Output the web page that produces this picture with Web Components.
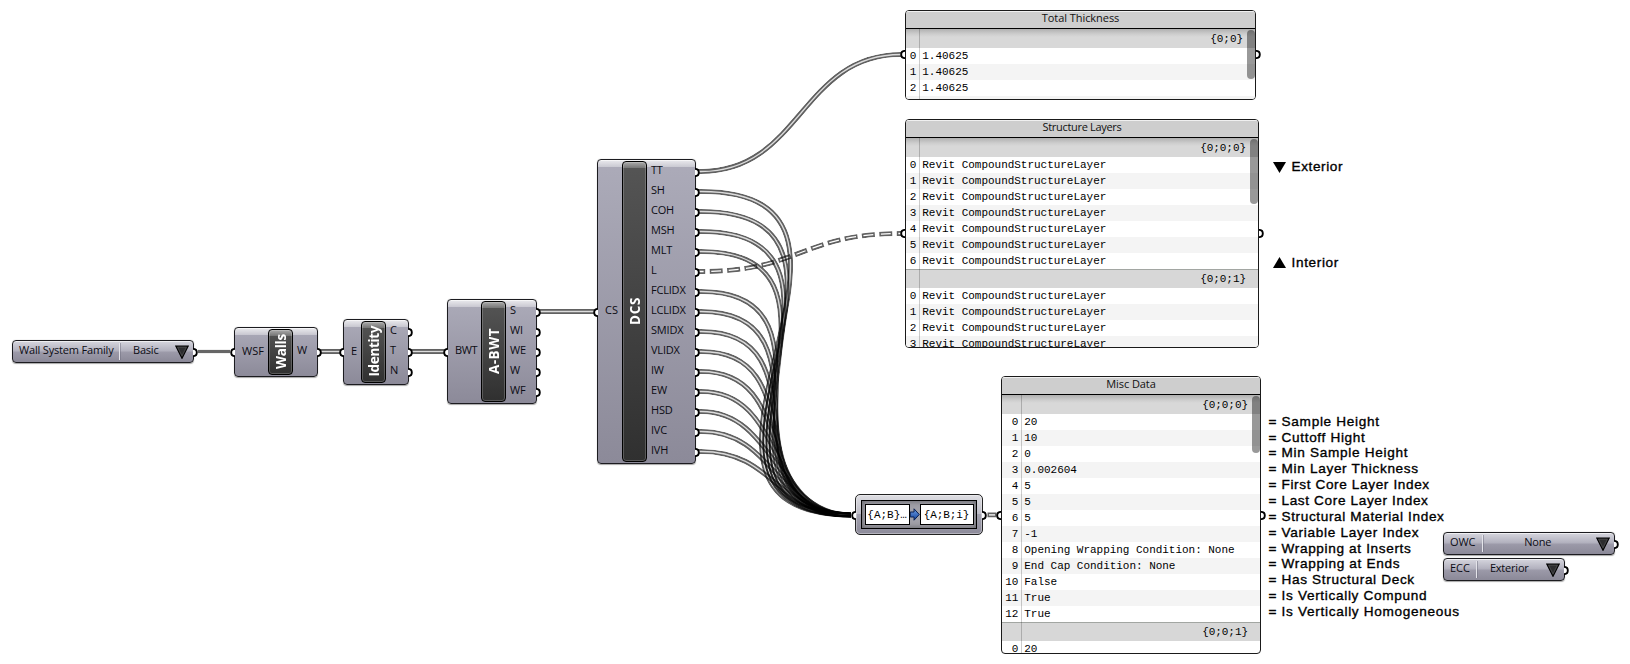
<!DOCTYPE html>
<html lang="en">
<head>
<meta charset="utf-8">
<title>Wall structure definition</title>
<style>
html,body{margin:0;padding:0;background:#fff}
body{width:1630px;height:664px;overflow:hidden;font-family:"Open Sans","Noto Sans",sans-serif}
</style>
</head>
<body>
<gh-canvas></gh-canvas>
<script>
const esc = s => String(s).replace(/&/g,'&amp;').replace(/</g,'&lt;');
class Base extends HTMLElement {
  connectedCallback() {
    if (!this.shadowRoot) this.attachShadow({mode:'open'});
    this.shadowRoot.innerHTML = this.view();
    if (this.after) this.after();
  }
}

/* text run spaced out to a given advance width */
class GhText extends Base {
  view() { return `<style>:host{display:inline-block;white-space:pre}span{display:inline-block}</style><span><slot></slot></span>`; }
  after() {
    const w = +this.getAttribute('w'), n = this.textContent.length;
    if (!w || n < 2) return;
    const span = this.shadowRoot.querySelector('span');
    const dir = this.hasAttribute('vertical') ? 'height' : 'width';
    const cur = span.getBoundingClientRect()[dir];
    if (cur) span.style.letterSpacing = ((w - cur) / n).toFixed(3) + 'px';
  }
}
customElements.define('gh-text', GhText);

/* half-round connection grip that sits on a node's edge */
class GhGrip extends Base {
  view() {
    return `<style>
:host{position:absolute;width:5px;height:9px;top:calc(50% - 4px);right:-5px}
:host([side=in]){right:auto;left:-5px}
svg{display:block}
:host([side=in]) svg{transform:scaleX(-1)}
</style><svg width="5" height="9" viewBox="0 0 5 9"><path d="M0 .9C2.2.9 3.8 2.4 3.8 4.5S2.2 8.1 0 8.1" fill="#fff" stroke="#000" stroke-width="1.9"/></svg>`;
  }
}
customElements.define('gh-grip', GhGrip);

class GhComponent extends Base {
  view() {
    const a = n => this.getAttribute(n);
    const outs = a('outs').split(',');
    return `<style>
:host{display:block}
.body{position:relative;box-sizing:border-box;width:100%;height:100%;display:flex;align-items:stretch;border:1px solid #1c1c20;border-radius:4px;
 background:linear-gradient(rgba(255,255,255,.75),rgba(255,255,255,.36) 7px,transparent 7.5px),linear-gradient(#acabb9,#8c8a99);
 box-shadow:inset 0 1px 0 rgba(255,255,255,.6),0 .5px 1px rgba(0,0,0,.35);font-size:11px;color:#0c0c14}
.in{position:relative;flex:none;width:${+a('tx')-1}px;display:flex;align-items:center}
.in gh-text{margin-left:7px;margin-top:-4px}
.title{flex:none;box-sizing:border-box;width:25px;margin:1px 0;border:1.5px solid #000;border-radius:4px;display:flex;align-items:center;justify-content:center;
 background:linear-gradient(rgba(255,255,255,.5),rgba(255,255,255,.2) 6px,transparent 6.5px),linear-gradient(#555,#303030);
 box-shadow:inset 0 0 0 1px rgba(255,255,255,.2);color:#fff;font-weight:700;font-size:13.5px}
.title gh-text{writing-mode:vertical-rl;transform:rotate(180deg);line-height:20px;margin-top:-1px}
.outs{flex:1;display:flex;flex-direction:column;justify-content:center}
.o{position:relative;height:20px;line-height:15px;padding-left:4px;letter-spacing:-.2px}
</style><div class="body">
<div class="in"><gh-grip side="in"></gh-grip><gh-text w="${a('iw')}">${a('in')}</gh-text></div>
<div class="title"><gh-text vertical w="${a('tw')}">${a('title')}</gh-text></div>
<div class="outs">${outs.map(o=>`<div class="o">${o}<gh-grip></gh-grip></div>`).join('')}</div>
</div>`;
  }
}
customElements.define('gh-component', GhComponent);

class GhValueList extends Base {
  view() {
    const a = n => this.getAttribute(n);
    return `<style>
:host{display:block}
.body{position:relative;box-sizing:border-box;width:100%;height:100%;display:flex;align-items:center;border:1.3px solid #1c1c20;border-radius:4px;
 background:linear-gradient(#d6d6de,#b3b2bf 45%,#9b99a8 55%,#8b8998);box-shadow:inset 0 1px 0 rgba(255,255,255,.6),0 .5px 1px rgba(0,0,0,.35);font-size:11px;color:#0c0c14}
.l{flex:none;width:${+a('dx')-1}px;height:17px;line-height:14px;box-sizing:border-box;padding-left:6px;border-right:1px solid #e4e4ea;box-shadow:1px 0 0 rgba(110,110,125,.5)}
.v{flex:1;text-align:center;line-height:14px;height:17px;padding-right:${a('pr')||0}px}
svg{flex:none;margin-right:4px}
</style><div class="body"><div class="l"><gh-text w="${a('lw')}">${a('label')}</gh-text></div><div class="v"><gh-text w="${a('vw')}">${a('value')}</gh-text></div>
<svg width="14" height="14" viewBox="0 0 14 14"><path d="M.7 1H13.3L7 13.4Z" fill="#222" stroke="#000" stroke-width="1.1"/><path d="M2.6 2.2H11.4L7 10.9Z" fill="#2c2c2e" stroke="#66666b" stroke-width=".5"/></svg>
<gh-grip></gh-grip></div>`;
  }
}
customElements.define('gh-value-list', GhValueList);

class GhPanel extends Base {
  view() {
    const a = n => this.getAttribute(n);
    const groups = JSON.parse(a('groups'));
    return `<style>
:host{display:block}
.wrap{position:relative;width:100%;height:100%}
.body{position:relative;box-sizing:border-box;width:100%;height:100%;display:flex;flex-direction:column;border:1.4px solid #1a1a1a;border-radius:4px;overflow:hidden;background:#fff}
.head{flex:none;box-sizing:border-box;height:18px;border-bottom:1.5px solid #000;background:#cecece;box-shadow:inset 0 1px 0 #f0f0f0;text-align:center;font-size:11px;line-height:14px;color:#111}
.list{position:relative;flex:1;overflow:hidden;font:11px/16px "Liberation Mono",monospace;color:#000}
.path{box-sizing:border-box;height:19px;line-height:20px;background:#d7d7d7;text-align:right;padding-right:${a('pr')}px;letter-spacing:-.05px}
.path.first{background:linear-gradient(#b0b0b0,#cdcdcd 5px,#d8d8d8 8px)}
.path:not(.first){border-top:1px solid #a2a6a2;line-height:18px}
.row{display:flex;height:16px;white-space:pre;letter-spacing:-.03px}
.row.alt{background:#f4f4f4}
.i{flex:none;width:${+a('gx')-4.2}px;text-align:right}
.val{margin-left:6px}
.gut{position:absolute;left:${+a('gx')-2}px;top:0;bottom:0;width:1px;background:rgba(0,0,0,.2)}
.bar{position:absolute;right:.5px;top:1px;width:7.6px;height:${a('bar')}px;border-radius:4px;background:rgba(0,0,0,.4)}
.port{position:absolute;left:0;right:0;top:${+a('py')-4.5}px;height:9px}
</style><div class="wrap"><div class="body"><div class="head"><gh-text w="${a('tw')}">${a('title')}</gh-text></div>
<div class="list">${groups.map((g,k)=>`<div class="path${k?'':' first'}">${g.p}</div>`+g.r.map((v,i)=>`<div class="row${i%2?' alt':''}">${v===''?'':`<span class="i">${i}</span><span class="val">${esc(v)}</span>`}</div>`).join('')).join('')}
<div class="gut"></div><div class="bar"></div></div></div>
<div class="port"><gh-grip side="in"></gh-grip><gh-grip></gh-grip></div></div>`;
  }
}
customElements.define('gh-panel', GhPanel);

class GhPathMapper extends Base {
  view() {
    return `<style>
:host{display:block}
.body{position:relative;box-sizing:border-box;width:100%;height:100%;padding:5px;border:1.4px solid #222;border-radius:5px;
 background:linear-gradient(#dedee3,#bdbcc6 49%,#a3a2af 50%,#8d8b9a);box-shadow:inset 0 0 0 1px rgba(255,255,255,.35)}
.frame{box-sizing:border-box;width:100%;height:100%;border:1.2px solid #000;display:flex;align-items:center;padding:0 2.6px;
 background:#a2a1a9;box-shadow:inset 0 0 5px 1px #6a6a70}
.c{flex:none;box-sizing:border-box;height:21px;border:1.2px solid #000;background:#fff;font:11px/21px "Liberation Mono",monospace;white-space:nowrap;text-align:center}
svg{flex:none;display:block}
</style><div class="body"><gh-grip side="in"></gh-grip><div class="frame">
<div class="c" style="width:45px"><gh-text w="39.5">{A;B}…</gh-text></div>
<svg width="10" height="13" viewBox="0 0 9.5 13"><defs><linearGradient id="b" x1="0" y1="0" x2="0" y2="1"><stop offset="0" stop-color="#6f9fe6"/><stop offset="1" stop-color="#12429c"/></linearGradient></defs><path d="M0 4H3.8V.8L9 6.5L3.8 12.2V9H0Z" fill="url(#b)" stroke="#0a1f50" stroke-width="1"/></svg>
<div class="c" style="width:54px"><gh-text w="45.5">{A;B;i}</gh-text></div>
</div><gh-grip></gh-grip></div>`;
  }
}
customElements.define('gh-path-mapper', GhPathMapper);

class GhWires extends Base {
  view() {
    const W = [];
    const curve = (x1,y1,x2,y2) => {
      const k = Math.max((x2-x1)*.5, Math.abs(y2-y1)*.7);
      return `M${x1-3} ${y1}H${x1}C${x1+k} ${y1} ${x2-k} ${y2} ${x2} ${y2}`;
    };
    W.push({d:curve(701,171.5,901,54.5)});
    for (let i=1;i<15;i++) if (i!==5) W.push({d:curve(701,171.5+20*i,851,515)});
    W.push({d:curve(701,271.5,901,233.5),dash:'13 4.5',off:6,inner:'10 7.5',ioff:4.5});
    W.push({d:'M321 351.5H340'},{d:'M412 351.5H444'},{d:'M540 311.5H594'});
    W.push({d:'M986 514.9H997',dash:'9 20',off:-1.5,inner:'6 20',ioff:-3});
    const dash = (v,o) => v ? `stroke-dasharray="${v}" stroke-dashoffset="${o}"` : '';
    return `<style>:host{display:block}svg{display:block}</style>
<svg width="1630" height="664" fill="none"><defs>${W.map((w,i)=>`<mask id="m${i}" maskUnits="userSpaceOnUse" x="0" y="0" width="1630" height="664"><path d="${w.d}" stroke="#fff" stroke-width="5.2" ${dash(w.dash,w.off)}/><path d="${w.d}" stroke="${w.dash?'#000':'#383838'}" stroke-width="1.3" ${dash(w.inner,w.ioff)}/></mask>`).join('')}</defs>
<path d="M198 351.5H230" stroke="#000" stroke-opacity=".6" stroke-width="3.2"/>
${W.map((w,i)=>`<g mask="url(#m${i})"><path d="${w.d}" stroke="#000" stroke-opacity=".62" stroke-width="5.2"/></g>`).join('')}</svg>`;
  }
}
customElements.define('gh-wires', GhWires);

class GhNotes extends Base {
  view() {
    const notes = [['Sample Height',110.3],['Cuttoff Hight',96],['Min Sample Height',138.7],['Min Layer Thickness',149.3],['First Core Layer Index',160.3],['Last Core Layer Index',159],['Structural Material Index',175],['Variable Layer Index',149.7],['Wrapping at Inserts',142],['Wrapping at Ends',130.7],['Has Structural Deck',145.3],['Is Vertically Compund',157.7],['Is Vertically Homogeneous',190.3]];
    return `<style>:host{display:flex;flex-direction:column;font:13.6px/15.86px "Liberation Sans",Arial,sans-serif;color:#000;-webkit-text-stroke:.35px #000}
div{height:15.86px}</style>${notes.map(n=>`<div><gh-text w="${n[1]+1}">= ${n[0]}</gh-text></div>`).join('')}`;
  }
}
customElements.define('gh-notes', GhNotes);

class GhTag extends Base {
  view() {
    const up = this.hasAttribute('up');
    return `<style>:host{display:flex;align-items:center;gap:5.5px;height:16px;font:13.6px/16px "Liberation Sans",Arial,sans-serif;-webkit-text-stroke:.35px #000}svg{display:block;margin-top:${up?-1:0}px}</style>
<svg width="13" height="11" viewBox="0 0 13 11"><path d="${up?'M6.5 0L13 11H0Z':'M0 0H13L6.5 11Z'}"/></svg><gh-text w="${this.getAttribute('w')}">${this.getAttribute('text')}</gh-text>`;
  }
}
customElements.define('gh-tag', GhTag);

class GhCanvas extends Base {
  view() {
    const at = (x,y,w,h) => `style="left:${x}px;top:${y}px;width:${w}px;height:${h}px"`;
    const layer = Array(7).fill('Revit CompoundStructureLayer');
    const g1 = JSON.stringify([{p:'{0;0}',r:['1.40625','1.40625','1.40625','']}]);
    const g2 = JSON.stringify([{p:'{0;0;0}',r:layer},{p:'{0;0;1}',r:layer.slice(0,4)}]);
    const g3 = JSON.stringify([{p:'{0;0;0}',r:['20','10','0','0.002604','5','5','5','-1','Opening Wrapping Condition: None','End Cap Condition: None','False','True','True']},{p:'{0;0;1}',r:['20']}]);
    return `<style>:host{display:block;position:relative;width:1630px;height:664px;background:#fff;overflow:hidden}
.n{position:absolute}</style>
<gh-wires class="n" ${at(0,0,1630,664)}></gh-wires>
<gh-value-list class="n" ${at(12,340,182,23)} label="Wall System Family" lw="94.5" value="Basic" vw="25.5" dx="107.5" pr="3"></gh-value-list>
<gh-component class="n" ${at(234,327,84,50)} in="WSF" iw="22" tx="34" title="Walls" tw="35" outs="W"></gh-component>
<gh-component class="n" ${at(343,319,66,66)} in="E" iw="0" tx="18" title="Identity" tw="50.5" outs="C,T,N"></gh-component>
<gh-component class="n" ${at(447,299,90,105)} in="BWT" iw="22" tx="34" title="A-BWT" tw="46" outs="S,WI,WE,W,WF"></gh-component>
<gh-component class="n" ${at(597,159,99,305)} in="CS" iw="13" tx="25" title="DCS" tw="28" outs="TT,SH,COH,MSH,MLT,L,FCLIDX,LCLIDX,SMIDX,VLIDX,IW,EW,HSD,IVC,IVH"></gh-component>
<gh-path-mapper class="n" ${at(855,494,128,41)}></gh-path-mapper>
<gh-panel class="n" ${at(905,10,351,90)} title="Total Thickness" tw="77.5" gx="14.5" pr="12" bar="49" py="44" groups='${g1}'></gh-panel>
<gh-panel class="n" ${at(905,119,354,229)} title="Structure Layers" tw="79" gx="14.5" pr="12" bar="65" py="114" groups='${g2}'></gh-panel>
<gh-panel class="n" ${at(1001,376,260,278)} title="Misc Data" tw="49.5" gx="20.5" pr="12" bar="57" py="138.5" groups='${g3}'></gh-panel>
<gh-tag class="n" style="left:1273px;top:159px" text="Exterior" w="51.5"></gh-tag>
<gh-tag class="n" style="left:1273px;top:255px" text="Interior" w="47.5" up></gh-tag>
<gh-notes class="n" style="left:1268.5px;top:413.7px"></gh-notes>
<gh-value-list class="n" ${at(1443,532,172,23)} label="OWC" lw="25.5" value="None" vw="27" dx="39.5" pr="3"></gh-value-list>
<gh-value-list class="n" ${at(1443,558,122,23)} label="ECC" lw="20" value="Exterior" vw="38.7" dx="33.5" pr="4"></gh-value-list>`;
  }
}
customElements.define('gh-canvas', GhCanvas);
</script>
</body>
</html>
